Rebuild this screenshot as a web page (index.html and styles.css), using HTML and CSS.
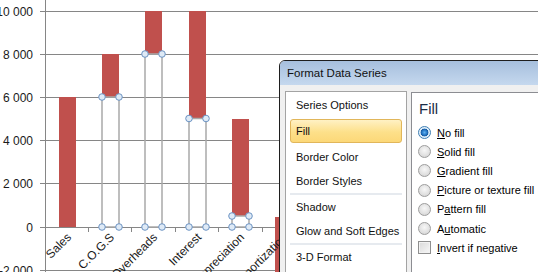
FILE: index.html
```html
<!DOCTYPE html>
<html>
<head>
<meta charset="utf-8">
<link rel="stylesheet" href="styles.css">
</head>
<body>
<div class="stage">
  <svg class="chart" width="538" height="272" viewBox="0 0 538 272">
    <g class="grid">
      <line x1="40" y1="11.5" x2="538" y2="11.5"/>
      <line x1="40" y1="54.5" x2="538" y2="54.5"/>
      <line x1="40" y1="97.5" x2="538" y2="97.5"/>
      <line x1="40" y1="140.5" x2="538" y2="140.5"/>
      <line x1="40" y1="183.5" x2="538" y2="183.5"/>
      <line x1="40" y1="227.5" x2="538" y2="227.5"/>
      <line x1="40" y1="270.5" x2="538" y2="270.5"/>
      <line x1="45.5" y1="0" x2="45.5" y2="272"/>
      <line x1="88.5" y1="227" x2="88.5" y2="232"/>
      <line x1="131.5" y1="227" x2="131.5" y2="232"/>
      <line x1="175.5" y1="227" x2="175.5" y2="232"/>
      <line x1="218.5" y1="227" x2="218.5" y2="232"/>
      <line x1="262.5" y1="227" x2="262.5" y2="232"/>
    </g>
    <g class="ylabels">
      <text x="33" y="15.5">10 000</text>
      <text x="33" y="58.5">8 000</text>
      <text x="33" y="101.5">6 000</text>
      <text x="33" y="144.5">4 000</text>
      <text x="33" y="187.5">2 000</text>
      <text x="33" y="231.5">0</text>
      <text x="33" y="274.5">-2 000</text>
    </g>
    <g class="bars">
      <rect x="59" y="97" width="17" height="130"/>
      <rect x="102" y="54" width="17" height="43"/>
      <rect x="145" y="11" width="17" height="43"/>
      <rect x="189" y="11" width="17" height="108"/>
      <rect x="232" y="119" width="17" height="97"/>
      <rect x="275" y="217" width="17" height="60"/>
    </g>
    <g class="sel">
      <rect x="102" y="97" width="17" height="130"/>
      <rect x="145" y="54" width="17" height="173"/>
      <rect x="189" y="118.5" width="17" height="108.5"/>
      <rect x="232" y="216" width="17" height="11"/>
    </g>
    <g class="marks">
      <circle cx="102" cy="97" r="3.3"/><circle cx="119" cy="97" r="3.3"/>
      <circle cx="102" cy="227" r="3.3"/><circle cx="119" cy="227" r="3.3"/>
      <circle cx="145" cy="54" r="3.3"/><circle cx="162" cy="54" r="3.3"/>
      <circle cx="145" cy="227" r="3.3"/><circle cx="162" cy="227" r="3.3"/>
      <circle cx="189" cy="118.5" r="3.3"/><circle cx="206" cy="118.5" r="3.3"/>
      <circle cx="189" cy="227" r="3.3"/><circle cx="206" cy="227" r="3.3"/>
      <circle cx="232" cy="216" r="3.3"/><circle cx="249" cy="216" r="3.3"/>
      <circle cx="232" cy="227" r="3.3"/><circle cx="249" cy="227" r="3.3"/>
    </g>
    <g class="xlabels">
      <text x="72" y="238" transform="rotate(-45 72 238)">Sales</text>
      <text x="115" y="238" transform="rotate(-45 115 238)">C.O.G.S</text>
      <text x="158" y="238" transform="rotate(-45 158 238)">Overheads</text>
      <text x="202" y="238" transform="rotate(-45 202 238)">Interest</text>
      <text x="245" y="238" transform="rotate(-45 245 238)">Depreciation</text>
      <text x="288" y="238" transform="rotate(-45 288 238)">Amortization</text>
    </g>
  </svg>

  <div class="dialog">
    <div class="titlebar">Format Data Series</div>
    <div class="body">
      <ul class="nav">
        <li class="item">Series Options</li>
        <li class="item selected">Fill</li>
        <li class="item">Border Color</li>
        <li class="item">Border Styles</li>
        <li class="sep"></li>
        <li class="item">Shadow</li>
        <li class="item">Glow and Soft Edges</li>
        <li class="sep"></li>
        <li class="item">3-D Format</li>
      </ul>
      <div class="panel">
        <h2 class="heading">Fill</h2>
        <div class="opt"><span class="radio on"></span><span><u>N</u>o fill</span></div>
        <div class="opt"><span class="radio"></span><span><u>S</u>olid fill</span></div>
        <div class="opt"><span class="radio"></span><span><u>G</u>radient fill</span></div>
        <div class="opt"><span class="radio"></span><span><u>P</u>icture or texture fill</span></div>
        <div class="opt"><span class="radio"></span><span>P<u>a</u>ttern fill</span></div>
        <div class="opt"><span class="radio"></span><span>A<u>u</u>tomatic</span></div>
        <div class="opt"><span class="check"></span><span><u>I</u>nvert if negative</span></div>
      </div>
    </div>
  </div>
</div>
</body>
</html>
```
FILE: styles.css
```css
html, body {
  margin: 0;
  padding: 0;
  background: #ffffff;
}
.stage {
  position: relative;
  width: 538px;
  height: 272px;
  overflow: hidden;
  font-family: "Liberation Sans", Arial, sans-serif;
}
.chart {
  display: block;
}
.grid line {
  stroke: #868686;
  stroke-width: 1;
}
.ylabels text {
  font-family: "Liberation Sans", Arial, sans-serif;
  font-size: 12px;
  fill: #1a1a1a;
  text-anchor: end;
}
.xlabels text {
  font-family: "Liberation Sans", Arial, sans-serif;
  font-size: 12px;
  fill: #1a1a1a;
  text-anchor: end;
}
.bars rect {
  fill: #c0504d;
}
.sel rect {
  fill: none;
  stroke: #a9a9a9;
  stroke-width: 1.5;
}
.marks circle {
  fill: #dfeaf6;
  stroke: #6b93c3;
  stroke-width: 1;
}

.dialog {
  position: absolute;
  left: 279px;
  top: 60px;
  width: 280px;
  height: 230px;
  box-sizing: border-box;
  border: 1px solid #1e1e1e;
  border-radius: 6px 0 0 0;
  background: #f0f0f0;
  font-size: 11px;
  color: #000;
  overflow: hidden;
}
.titlebar {
  height: 24px;
  line-height: 24px;
  padding-left: 7px;
  background: linear-gradient(#a6bfdd, #c5d8ee);
  color: #111;
  font-size: 11.5px;
}
.body {
  display: flex;
  align-items: flex-start;
  gap: 4px;
  padding: 6px 0 0 5px;
}
.nav {
  list-style: none;
  margin: 0;
  width: 122px;
  height: 200px;
  box-sizing: border-box;
  padding: 1px 4px;
  border: 1px solid #a3a3a3;
  background: #fff;
  flex: none;
}
.item {
  height: 24px;
  line-height: 24px;
  padding-left: 6px;
  white-space: nowrap;
  color: #111;
}
.item.selected {
  margin: 2px 0;
  box-sizing: border-box;
  line-height: 22px;
  padding-left: 5px;
  border: 1px solid #e1b65a;
  border-radius: 3px;
  background: linear-gradient(#fff1c4, #fde08a 55%, #fcd878);
}
.sep {
  height: 2px;
  background: #e6eaef;
}
.panel {
  flex: 1;
  margin-top: 1px;
  height: 200px;
  border-top: 1px solid #8c8d92;
  border-left: 1px solid #8c8d92;
  background: #fff;
  padding: 6px 0 0 6px;
}
.heading {
  margin: 0 0 4px 1px;
  font-size: 15px;
  line-height: 20px;
  font-weight: normal;
  color: #1b2e48;
}
.opt {
  display: flex;
  align-items: center;
  gap: 6px;
  height: 19.2px;
  white-space: nowrap;
}
.radio {
  width: 13px;
  height: 13px;
  box-sizing: border-box;
  border-radius: 50%;
  border: 1px solid #9d9d9d;
  background: radial-gradient(circle at 50% 40%, #f7f7f7 0, #e6e6e6 45%, #cfcfcf 100%);
  flex: none;
}
.radio.on {
  border-color: #3f7fb4;
  background: radial-gradient(circle at 50% 50%, #5fb2f0 0, #1f6fc0 2.8px, #1a5b9e 3.6px, #d4e8f8 4.2px, #eef6fd 6px);
}
.check {
  width: 13px;
  height: 13px;
  box-sizing: border-box;
  border: 1px solid #8f8f8f;
  background: linear-gradient(135deg, #d9d9d9, #f7f7f7);
  box-shadow: inset 0 0 0 1px #f2f2f2;
  flex: none;
}
u {
  text-decoration: underline;
  text-underline-offset: 1px;
}
```
